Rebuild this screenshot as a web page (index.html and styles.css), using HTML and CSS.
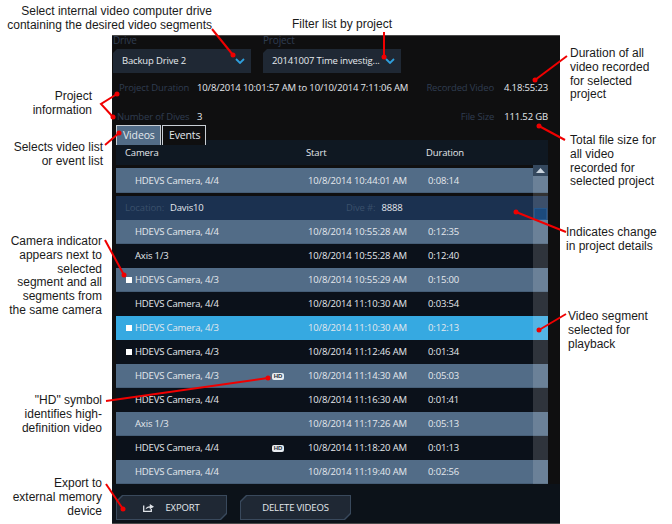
FILE: index.html
```html
<!DOCTYPE html>
<html lang="en">
<head>
  <meta charset="UTF-8">
  <meta name="viewport" content="width=device-width, initial-scale=1.0">
  <title>Video list callouts</title>
  <link rel="stylesheet" href="styles.css">
</head>
<body>
  <div class="figure">
    <div class="panel">
      <div class="top">
        <div class="pickers">
          <div class="picker">
            <div class="picker-label">Drive</div>
            <div class="select">
              <span>Backup Drive 2</span>
              <svg class="chev" width="10" height="6" viewBox="0 0 10 6"><path d="M1 1l4 4 4-4" fill="none" stroke="#2f9fdc" stroke-width="1.8"/></svg>
            </div>
          </div>
          <div class="picker">
            <div class="picker-label">Project</div>
            <div class="select">
              <span>20141007 Time investig...</span>
              <svg class="chev" width="10" height="6" viewBox="0 0 10 6"><path d="M1 1l4 4 4-4" fill="none" stroke="#2f9fdc" stroke-width="1.8"/></svg>
            </div>
          </div>
        </div>
        <div class="info info-first">
          <span class="dim info-name">Project Duration</span>
          <span class="val val-range">10/8/2014 10:01:57 AM to 10/10/2014 7:11:06 AM</span>
          <span class="dim dim-right">Recorded Video</span>
          <span class="val">4.18:55:23</span>
        </div>
        <div class="info info-second">
          <span class="dim info-name">Number of Dives</span>
          <span class="val val-range">3</span>
          <span class="dim dim-right">File Size</span>
          <span class="val">111.52 GB</span>
        </div>
      </div>

      <div class="tabs">
        <div class="tab tab-on">Videos</div>
        <div class="tab">Events</div>
      </div>

      <div class="list">
        <div class="head">
          <span>Camera</span>
          <span>Start</span>
          <span>Duration</span>
        </div>
        <div class="rows">
          <div class="row slate first"><i></i><span class="cam">HDEVS Camera, 4/4</span><span>10/8/2014 10:44:01 AM</span><span>0:08:14</span></div>
          <div class="loc">
            <div class="loc-a"><span class="dim">Location:</span><span>Davis10</span></div>
            <div class="loc-b"><span class="dim">Dive #:</span><span>8888</span></div>
          </div>
          <div class="row slate"><i></i><span class="cam">HDEVS Camera, 4/4</span><span>10/8/2014 10:55:28 AM</span><span>0:12:35</span></div>
          <div class="row"><i></i><span class="cam">Axis 1/3</span><span>10/8/2014 10:55:28 AM</span><span>0:12:40</span></div>
          <div class="row slate"><i class="mark"></i><span class="cam">HDEVS Camera, 4/3</span><span>10/8/2014 10:55:29 AM</span><span>0:15:00</span></div>
          <div class="row"><i></i><span class="cam">HDEVS Camera, 4/4</span><span>10/8/2014 11:10:30 AM</span><span>0:03:54</span></div>
          <div class="row selected"><i class="mark"></i><span class="cam">HDEVS Camera, 4/3</span><span>10/8/2014 11:10:30 AM</span><span>0:12:13</span></div>
          <div class="row"><i class="mark"></i><span class="cam">HDEVS Camera, 4/3</span><span>10/8/2014 11:12:46 AM</span><span>0:01:34</span></div>
          <div class="row slate"><i></i><span class="cam">HDEVS Camera, 4/3<b class="hd">HD</b></span><span>10/8/2014 11:14:30 AM</span><span>0:05:03</span></div>
          <div class="row"><i></i><span class="cam">HDEVS Camera, 4/4</span><span>10/8/2014 11:16:30 AM</span><span>0:01:41</span></div>
          <div class="row slate"><i></i><span class="cam">Axis 1/3</span><span>10/8/2014 11:17:26 AM</span><span>0:05:13</span></div>
          <div class="row"><i></i><span class="cam">HDEVS Camera, 4/4<b class="hd">HD</b></span><span>10/8/2014 11:18:20 AM</span><span>0:01:13</span></div>
          <div class="row slate"><i></i><span class="cam">HDEVS Camera, 4/4</span><span>10/8/2014 11:19:40 AM</span><span>0:02:56</span></div>
          <div class="scrollbar">
            <div class="scroll-up">
              <svg width="9" height="5" viewBox="0 0 9 5"><path d="M4.500 0L9 5H0z" fill="#c9d3dd"/></svg>
            </div>
            <div class="thumb"></div>
          </div>
        </div>
      </div>

      <div class="actions">
        <div class="btn btn-export">
          <svg width="11" height="9" viewBox="0 0 11 9"><path d="M.7 2.500V8.300H8.300V6" fill="none" stroke="#dfe3e8" stroke-width="1.300"/><path d="M2.500 6.500C3 4.300 4.700 3.200 6.800 3.200V1L11 3.800 6.800 6.300V4.700C5 4.700 3.700 5.200 2.500 6.500z" fill="#dfe3e8"/></svg>
          <span>EXPORT</span>
        </div>
        <div class="btn btn-delete"><span>DELETE VIDEOS</span></div>
      </div>
    </div>

    <!-- callouts -->
    <svg class="lines" width="672" height="524" viewBox="0 0 672 524">
      <g fill="none" stroke="#f00000" stroke-width="2">
        <path d="M212 29L233 55"/>
        <path d="M384 32L384 57"/>
        <path d="M117 94L101 104L113 117"/>
        <path d="M105 145L119 133"/>
        <path d="M567 56L535 80"/>
        <path d="M539 126L565 140"/>
        <path d="M105 240L124 275"/>
        <path d="M566 232L516 212"/>
        <path d="M566 314L539 330"/>
        <path d="M106 401L268 378"/>
        <path d="M106 484L123 509"/>
      </g>
      <g fill="#f00000">
        <circle cx="233" cy="55" r="2.500"/>
        <circle cx="384" cy="57" r="2.500"/>
        <circle cx="117" cy="94" r="2.500"/>
        <circle cx="113" cy="117" r="2.500"/>
        <circle cx="119" cy="133" r="2.500"/>
        <circle cx="535" cy="80" r="2.500"/>
        <circle cx="539" cy="126" r="2.500"/>
        <circle cx="124" cy="275" r="2.500"/>
        <circle cx="516" cy="212" r="2.500"/>
        <circle cx="539" cy="330" r="2.500"/>
        <circle cx="268" cy="378" r="2.500"/>
        <circle cx="123" cy="509" r="2.500"/>
      </g>
    </svg>

    <div class="note note-drive">Select internal video computer drive<br>containing the desired video segments</div>
    <div class="note note-filter">Filter list by project</div>
    <div class="note note-info">Project<br>information</div>
    <div class="note note-tabs">Selects video list<br>or event list</div>
    <div class="note note-cam">Camera indicator<br>appears next to<br>selected<br>segment and all<br>segments from<br>the same camera</div>
    <div class="note note-hd">"HD" symbol<br>identifies high-<br>definition video</div>
    <div class="note note-export">Export to<br>external memory<br>device</div>
    <div class="note left note-rec">Duration of all<br>video recorded<br>for selected<br>project</div>
    <div class="note left note-size">Total file size for<br>all video<br>recorded for<br>selected project</div>
    <div class="note left note-change">Indicates change<br>in project details</div>
    <div class="note left note-seg">Video segment<br>selected for<br>playback</div>
  </div>
</body>
</html>
```

FILE: styles.css
```css
html, body {
  margin: 0;
  padding: 0;
  background: #ffffff;
}

.figure {
  position: relative;
  width: 672px;
  height: 524px;
  overflow: hidden;
  padding: 35px 0 0 112px;
  box-sizing: border-box;
}

.panel {
  width: 448px;
  height: 489px;
  box-sizing: border-box;
  display: flex;
  flex-direction: column;
  background: #0f0f10;
  border-top: 1px solid #4a4a4a;
  border-bottom: 1px solid #4a4a4a;
  color: #e4e8ed;
  font: 9.5px/14px "Open Sans", sans-serif;
  letter-spacing: -0.15px;
}

.dim {
  color: #2f3d50;
}

.top {
  height: 89px;
  flex: none;
}

.pickers {
  display: flex;
  gap: 12px;
  padding-left: 1px;
}

.picker-label {
  height: 13px;
  line-height: 9px;
  color: #2f3d50;
  font-size: 10px;
}

.select {
  width: 138px;
  height: 24px;
  box-sizing: border-box;
  padding: 0 6px 0 9px;
  display: flex;
  align-items: center;
  justify-content: space-between;
  white-space: nowrap;
  background: #1f2834;
  clip-path: polygon(4px 0, 100% 0, 100% 100%, 0 100%, 0 4px);
}

.info {
  display: flex;
  padding-right: 12px;
  white-space: nowrap;
}

.info-first {
  margin-top: 8px;
  padding-left: 7px;
}

.info-first .info-name {
  width: 78px;
}

.info-second {
  margin-top: 15px;
  padding-left: 5px;
}

.info-second .info-name {
  width: 80px;
}

.val-range {
  margin-right: auto;
}

.dim-right {
  margin-right: 10px;
}

.tabs {
  position: relative;
  display: flex;
  flex: none;
  height: 20px;
  padding-left: 4px;
  gap: 1px;
}

.tab {
  box-sizing: border-box;
  width: 44px;
  height: 20px;
  padding-left: 6px;
  line-height: 19px;
  font-size: 10.5px;
  background: #0f0f10;
  border: 1px solid #c9ced4;
  border-bottom: 0;
}

.tab.tab-on {
  background: #526c87;
  width: 45px;
}

.list {
  flex: none;
  margin: -5px 0 0 4px;
  width: 432px;
}

.head {
  display: grid;
  grid-template-columns: 181px 120px 1fr;
  height: 25px;
  line-height: 14px;
  padding: 6px 0 0 9px;
  box-sizing: border-box;
  background: #0f1822;
}

.rows {
  position: relative;
  height: 319px;
  padding-top: 3px;
  box-sizing: border-box;
}

.row {
  display: grid;
  grid-template-columns: 19px 173px 120px 1fr;
  align-items: center;
  height: 24px;
  background: #0b111a;
}

.row.first {
  height: 25px;
}

.slate {
  background: #526c87;
  box-shadow: inset 0 -1px 0 #465e77;
}

.selected {
  background: #36a9e1;
}

.row i {
  display: block;
  width: 6px;
  height: 6px;
  margin-left: 10px;
}

.row i.mark {
  background: #ffffff;
}

.cam {
  display: flex;
  justify-content: space-between;
  align-items: center;
  padding-right: 24px;
}

.hd {
  width: 12px;
  height: 7px;
  border-radius: 2px;
  background: #e8ecf0;
  color: #26303c;
  font: bold 6px/7px "Liberation Sans", sans-serif;
  letter-spacing: 0;
  text-align: center;
}

.loc {
  display: flex;
  height: 24px;
  margin-top: 3px;
  align-items: center;
  background: #1b3150;
  padding-left: 9px;
}

.loc .dim {
  color: #3a506b;
}

.loc-a {
  display: flex;
  gap: 6px;
  width: 221px;
}

.loc-b {
  display: flex;
  gap: 6px;
}

.scrollbar {
  position: absolute;
  top: 0;
  right: 0;
  bottom: 0;
  width: 15px;
  background: rgba(255, 255, 255, 0.15);
}

.scroll-up {
  height: 11px;
  display: flex;
  align-items: center;
  justify-content: center;
  background: #34485e;
}

.thumb {
  position: absolute;
  top: 43px;
  left: 1px;
  width: 13px;
  height: 12px;
  background: #1c4a7c;
  border: 1px solid #25578c;
  box-sizing: border-box;
}

.actions {
  flex: 1;
  display: flex;
  gap: 13px;
  background: #0c1219;
  padding: 11px 0 0 4px;
}

.btn {
  position: relative;
  width: 111px;
  height: 25px;
  display: flex;
  align-items: center;
  justify-content: center;
  background: #39495c;
  clip-path: polygon(6px 0, 100% 0, 100% calc(100% - 6px), calc(100% - 6px) 100%, 0 100%, 0 6px);
}

.btn::before {
  content: "";
  position: absolute;
  inset: 1px;
  background: #1f2834;
  clip-path: polygon(6px 0, 100% 0, 100% calc(100% - 6px), calc(100% - 6px) 100%, 0 100%, 0 6px);
}

.btn > * {
  position: relative;
}

.btn-export {
  gap: 11px;
}

.lines {
  position: absolute;
  left: 0;
  top: 0;
}

.note {
  position: absolute;
  color: #1a1a1a;
  font: 12px/13.8px "Liberation Sans", Arial, sans-serif;
  text-align: right;
  white-space: nowrap;
}

.note.left {
  text-align: left;
}

.note-drive { right: 460px; top: 5px; }
.note-filter { left: 292px; top: 18px; }
.note-info { right: 580px; top: 90px; }
.note-tabs { right: 569px; top: 141px; }
.note-cam { right: 570px; top: 235px; }
.note-hd { right: 570px; top: 394px; }
.note-export { right: 570px; top: 477px; }
.note-rec { left: 570px; top: 47px; }
.note-size { left: 570px; top: 134px; }
.note-change { left: 566px; top: 226px; }
.note-seg { left: 568px; top: 310px; }
```
